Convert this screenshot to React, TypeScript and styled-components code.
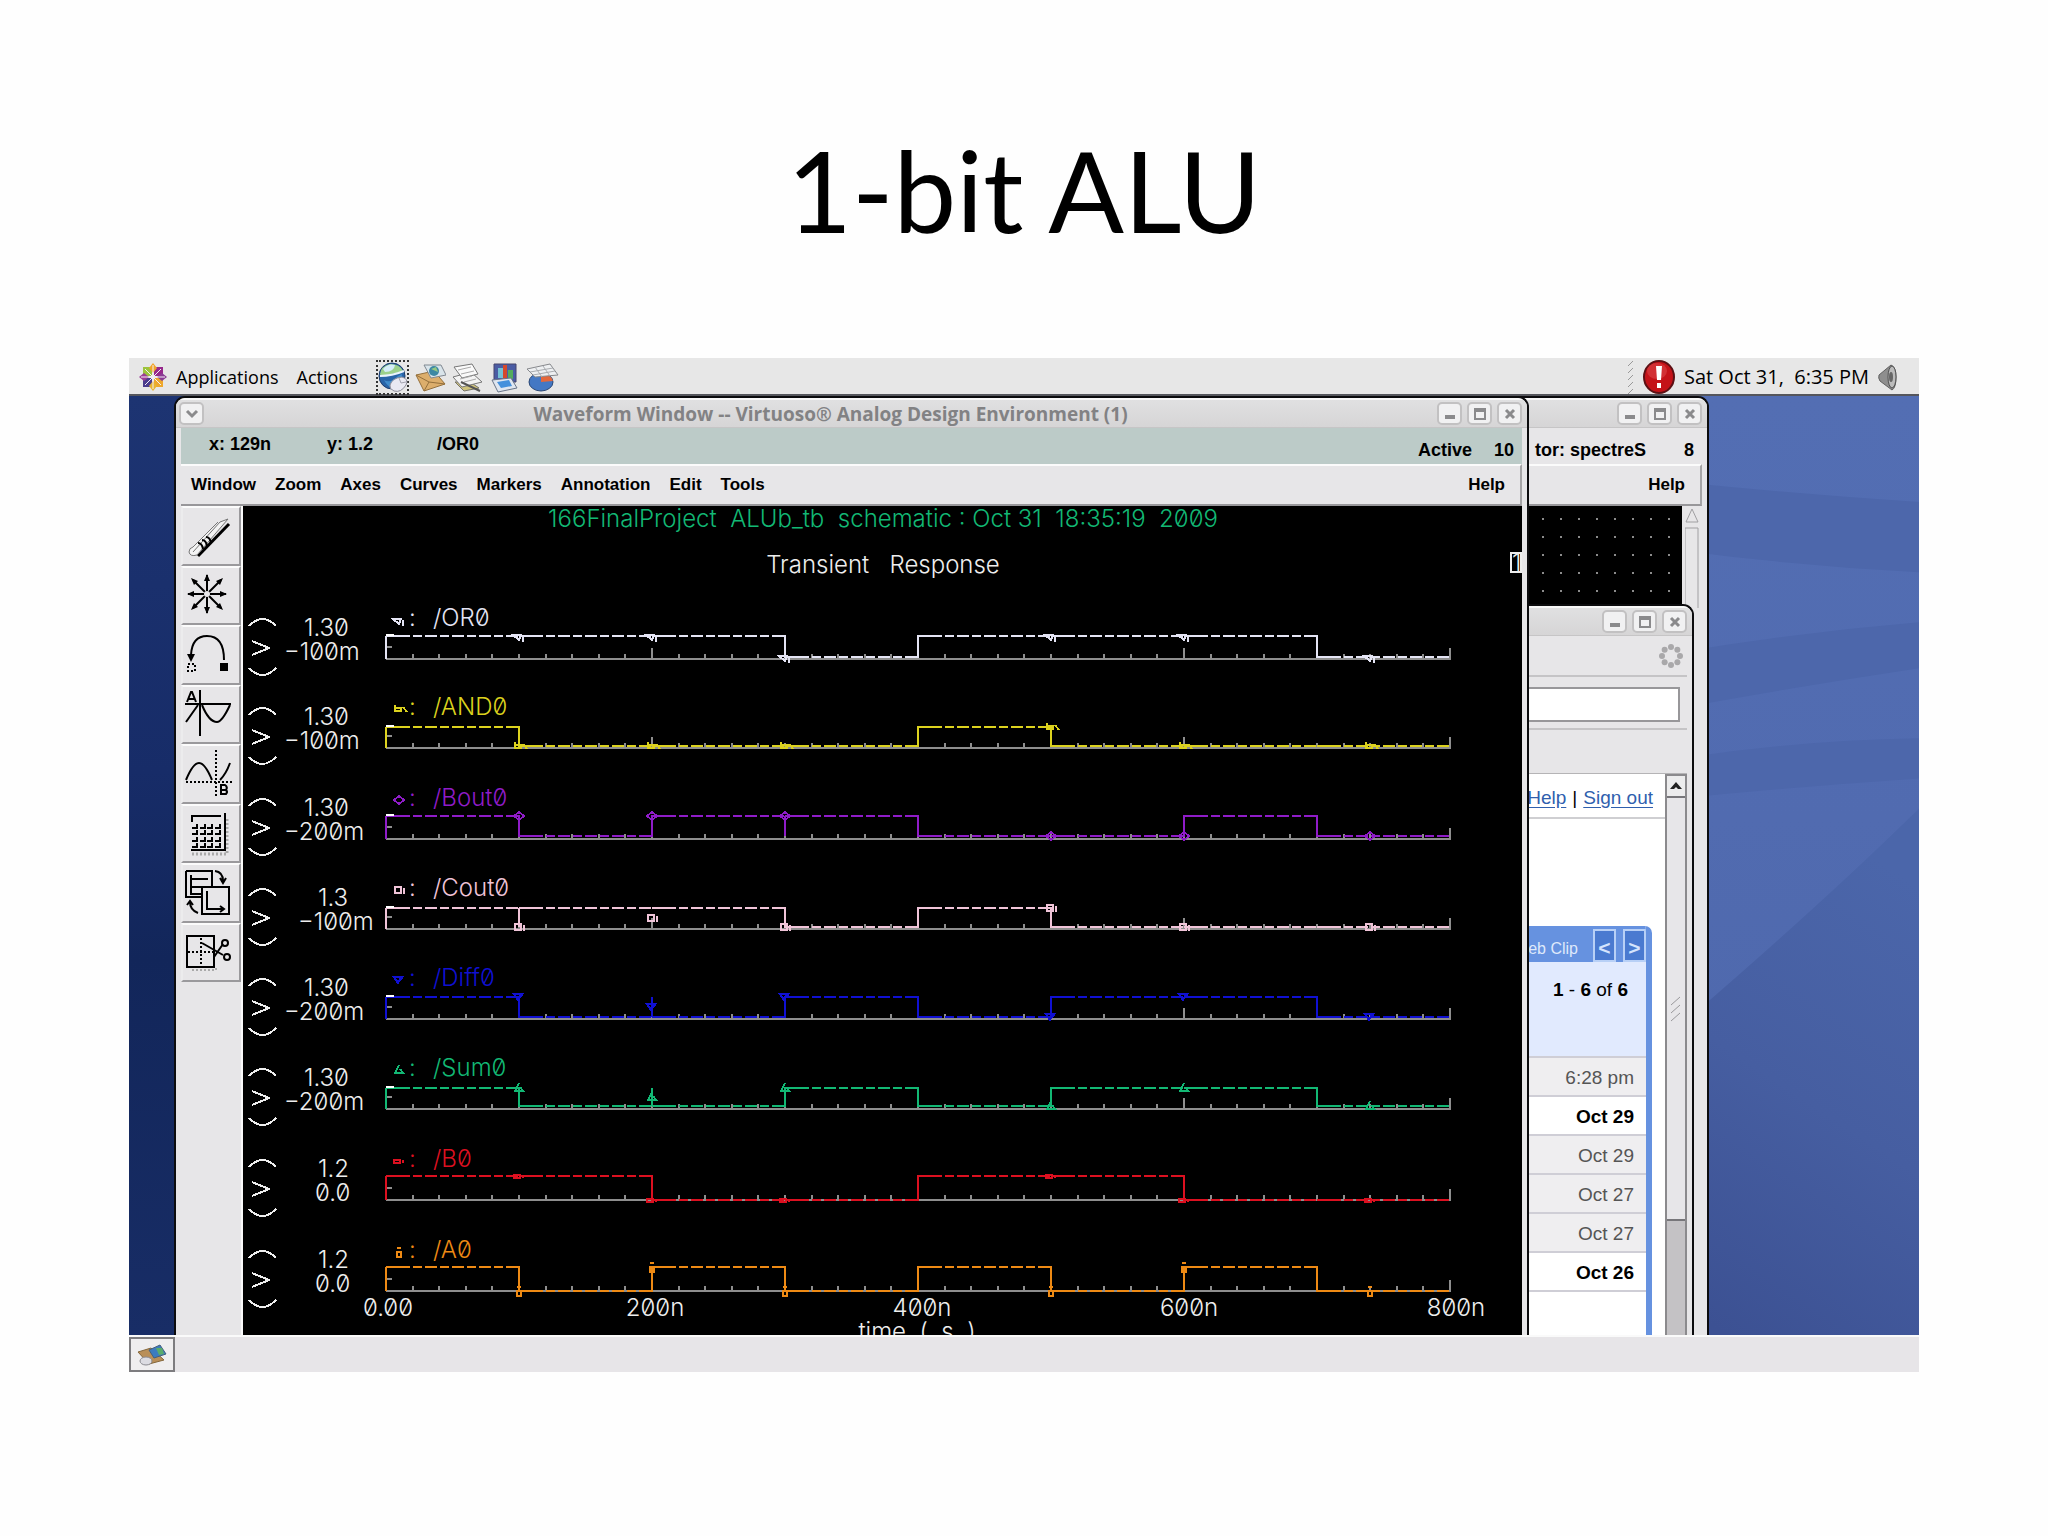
import React from 'react'
import styled, { createGlobalStyle } from 'styled-components'

const GlobalStyle = createGlobalStyle`
  * {
    box-sizing: border-box;
  }

  body {
    margin: 0;
    background-color: #fefefe;
    font-family: 'Open Sans', 'Noto Sans', sans-serif;
  }

  button {
    font: inherit;
    color: inherit;
    padding: 0;
  }

  svg {
    display: block;
    flex: none;
  }
`

const Slide = styled.main`
  min-height: 1536px;
  padding: 0 129px;
`

const SlideTitle = styled.h1`
  margin: 0;
  padding: 124px 0 102px;
  font-family: Lato, sans-serif;
  font-size: 112px;
  font-weight: 400;
  line-height: 132px;
  text-align: center;
  color: #000;
`

const Screen = styled.section`
  overflow: hidden;
`

const TopPanel = styled.header`
  display: flex;
  align-items: center;
  height: 38px;
  padding: 2px 21px 0 10px;
  border-bottom: 2px solid #55565c;
  background-color: #e7e7e7;
  font-size: 18px;
  line-height: 24px;
`

const PanelMenu = styled.button`
  display: flex;
  align-items: center;
  gap: 9px;
  margin-right: 18px;
  border: none;
  background: none;
`

const Launchers = styled.div`
  display: flex;
  align-items: center;
  gap: 4px;
`

const Launcher = styled.button<{ $focused?: boolean }>`
  display: grid;
  place-items: center;
  width: 33px;
  height: 35px;
  border: 2px dotted ${(p) => (p.$focused ? '#333' : 'transparent')};
  background: none;
`

const Tray = styled.div`
  display: flex;
  align-items: center;
  gap: 9px;
  margin-left: auto;
  white-space: pre;
`

const Clock = styled.span`
  font-size: 20px;
`

const Desktop = styled.div`
  position: relative;
  background: linear-gradient(#1d3472, #172c68 40%, #12265a 60%, #182d66);
`

const Wallpaper = styled.svg`
  position: absolute;
  top: 0;
  right: 0;
  width: 240px;
  height: 100%;
`

const WindowFrame = styled.section`
  overflow: hidden;
  padding: 0 5px;
  border: 2px solid #0c0c0e;
  border-bottom: none;
  border-radius: 11px 11px 0 0;
  background-color: #e7e6e8;
`

const MainWindow = styled(WindowFrame)`
  position: relative;
  margin: 0 390px 0 45px;
`

const BackWindow = styled(WindowFrame)<{ $top: number; $right: number }>`
  position: absolute;
  top: ${(p) => p.$top}px;
  right: ${(p) => p.$right}px;
  bottom: 0;
  width: 400px;
  display: flex;
  flex-direction: column;
`

const TitleBar = styled.div`
  display: flex;
  align-items: center;
  gap: 5px;
  height: 30px;
  flex: none;
  margin: 0 -5px;
  padding: 0 5px 0 3px;
  border-top: 2px solid #f8f8f8;
  background: linear-gradient(#e0e0e1, #d6d5d6);
  border-bottom: 1px solid #c6c5c6;
`

const TitleText = styled.h2`
  flex: 1;
  margin: 0 0 0 20px;
  font-size: 19px;
  font-weight: 700;
  line-height: 24px;
  text-align: center;
  color: #828284;
`

const WinButton = styled.button`
  display: grid;
  place-items: center;
  width: 25px;
  height: 23px;
  border: 2px solid #c2c1c2;
  border-radius: 5px;
  background-color: #f1f1f2;
`

const Spacer = styled.div`
  flex: 1;
`

const StatusBar = styled.div<{ $color: string }>`
  display: flex;
  align-items: center;
  flex: none;
  height: 36px;
  background-color: ${(p) => p.$color};
  font: 700 18px/22px 'Liberation Sans', Arial, sans-serif;
`

const Readouts = styled.div`
  display: grid;
  grid-template-columns: 118px 110px 100px;
  padding: 0 0 4px 28px;
`

const StatusRight = styled.div<{ $gap: number }>`
  display: flex;
  gap: ${(p) => p.$gap}px;
  margin-left: auto;
  padding: 8px 8px 0 0;
`

const MenuBar = styled.nav`
  display: flex;
  flex: none;
  gap: 19px;
  height: 42px;
  padding: 0 15px 0 10px;
  border-top: 2px solid #fbfbfb;
  border-right: 2px solid #a5a4a6;
  border-bottom: 2px solid #98979a;
  font: 700 17px/22px 'Liberation Sans', Arial, sans-serif;
`

const MenuItem = styled.button<{ $last?: boolean }>`
  border: none;
  background: none;
  margin-left: ${(p) => (p.$last ? 'auto' : '0')};
`

const WaveBody = styled.div`
  display: flex;
`

const ToolColumn = styled.div`
  width: 62px;
  flex: none;
  border-right: 2px solid #fafafa;
`

const Tools = styled.div`
  display: grid;
  grid-template-rows: repeat(8, 1fr);
  height: 476px;
`

const ToolButton = styled.button`
  display: grid;
  place-items: center;
  border: 2px solid;
  border-color: #fbfbfb #9a999c #9a999c #ececed;
  background-color: #e7e6e8;
`

const PlotArea = styled.div`
  flex: 1;
  min-width: 0;
  overflow: hidden;
  background-color: #000;
`

const PlotText = styled.text`
  font-family: Inter, sans-serif;
  font-size: 24px;
  font-weight: 300;
  font-feature-settings: 'zero' 1;
  white-space: pre;
`

const SchematicBody = styled.div`
  display: flex;
  flex: 1;
`

const SchematicCanvas = styled.div`
  flex: 1;
  background: radial-gradient(circle at 11px 13px, #8c8c8c 1px, transparent 1px) 0 0 / 18px 18px #000;
`

const SchematicScroll = styled.div`
  width: 20px;
  padding: 2px 3px;
`

const BrowserTools = styled.div`
  display: flex;
  align-items: center;
  justify-content: flex-end;
  flex: none;
  height: 41px;
  padding-right: 4px;
  border-bottom: 2px solid #c5c4c6;
`

const AddressRow = styled.div`
  flex: none;
  height: 53px;
  padding: 10px 7px 8px 0;
  border-bottom: 2px solid #c5c4c6;
`

const AddressInput = styled.input`
  display: block;
  width: 100%;
  height: 35px;
  border: 2px solid #98979a;
  background-color: #fff;
`

const BrowserBody = styled.div`
  display: flex;
  flex: 1;
  margin-top: 43px;
  border-top: 1px solid #b5b4b6;
`

const MailPage = styled.div`
  flex: 1;
  background-color: #fff;
  font: 400 20px/24px 'Liberation Sans', Arial, sans-serif;
`

const AccountLinks = styled.div`
  display: flex;
  justify-content: flex-end;
  gap: 6px;
  height: 45px;
  padding: 12px 12px 0 0;
  border-bottom: 2px solid #cfcfd2;
  font-size: 19px;

  a {
    color: #2f5fae;
    text-underline-offset: 3px;
  }
`

const MailBox = styled.div`
  height: 412px;
  margin: 107px 13px 0 0;
  border-right: 6px solid #6692e0;
  border-radius: 0 7px 0 0;
  overflow: hidden;
`

const ClipBar = styled.div`
  display: flex;
  justify-content: flex-end;
  gap: 7px;
  height: 36px;
  padding-top: 3px;
  background-color: #6692e0;
  color: #dfe9fb;
  font-size: 16px;
  line-height: 40px;
`

const ClipButton = styled.button`
  height: 33px;
  width: 23px;
  border: 2px solid #b8d0f6;
  background-color: #4a7ad0;
  color: #d5e4fd;
  font-size: 21px;
  font-weight: 700;
  line-height: 33px;
`

const ClipTitle = styled.span`
  margin-right: 8px;
`

const PageCount = styled.div`
  height: 94px;
  padding: 16px 18px 0 0;
  background-color: #e1eafe;
  font-size: 19px;
  text-align: right;
`

const MailTable = styled.table`
  width: 100%;
  border-collapse: collapse;
`

const MailDate = styled.td<{ $unread: boolean }>`
  height: 39px;
  padding: 2px 12px 0 0;
  border-top: 2px solid #cfced6;
  border-bottom: 2px solid #cfced6;
  background-color: ${(p) => (p.$unread ? '#fff' : '#efeef0')};
  color: ${(p) => (p.$unread ? '#000' : '#555')};
  font-size: 19px;
  font-weight: ${(p) => (p.$unread ? 700 : 400)};
  line-height: 24px;
  text-align: right;
`

const ScrollBar = styled.div`
  display: flex;
  flex-direction: column;
  width: 22px;
  border: 2px solid #8b8a8d;
  border-bottom: none;
  background-color: #c4c2c5;
`

const ScrollUp = styled.button`
  display: grid;
  place-items: center;
  height: 22px;
  border: none;
  border-bottom: 2px solid #77767a;
  background-color: #ececed;
`

const ScrollThumb = styled.div`
  display: grid;
  place-items: center;
  height: 423px;
  border-bottom: 2px solid #77767a;
  background-color: #e7e6e9;
`

const TaskBar = styled.footer`
  height: 37px;
  border-top: 2px solid #fafafa;
  background-color: #e7e5e8;
`

const TaskButton = styled.button`
  display: grid;
  place-items: center;
  width: 46px;
  height: 35px;
  border: 2px solid #7d7c7f;
  background-color: #efeeef;
`

type Trace = {
  name: string
  color: string
  top: string
  bottom: string
  labelX: [number, number]
  base: number
  high: number
  low: number
  // one entry for each 100n of the sweep
  bits: string
  spikes: number[]
  // high, low or middle for each of markerTimes
  markerLevels: string
  marker: string
}

const traces: Trace[] = [
  { name: '/OR0', color: '#e4e4f4', top: '1.30', bottom: '−100m', labelX: [61, 41], base: 153, high: 130, low: 151, bits: '11101110', spikes: [], markerLevels: 'hhlhhl', marker: 'M-6 -1H2L0 4ZM4 0V6' },
  { name: '/AND0', color: '#dcd21e', top: '1.30', bottom: '−100m', labelX: [61, 41], base: 242, high: 221, low: 240, bits: '10001000', spikes: [], markerLevels: 'lllhll', marker: 'M-4 -4V2H2V-1H-3M4 -2L8 3' },
  { name: '/Bout0', color: '#8f1cc8', top: '1.30', bottom: '−200m', labelX: [61, 41], base: 333, high: 310, low: 330, bits: '10110010', spikes: [300], markerLevels: 'hhhlll', marker: 'M-5 0L0 -4L5 0L0 4Z' },
  { name: '/Cout0', color: '#f0c4d8', top: '1.3', bottom: '−100m', labelX: [75, 55], base: 423, high: 402, low: 421, bits: '11101000', spikes: [100], markerLevels: 'lmlhll', marker: 'M-4 -3H2V3H-4ZM5 -2V4' },
  { name: '/Diff0', color: '#1010d2', top: '1.30', bottom: '−200m', labelX: [61, 41], base: 513, high: 491, low: 511, bits: '10010110', spikes: [200], markerLevels: 'hmhlhl', marker: 'M-5 -3H2L-1 3ZM4 -4L1 1' },
  { name: '/Sum0', color: '#12b874', top: '1.30', bottom: '−200m', labelX: [61, 41], base: 603, high: 582, low: 600, bits: '10010110', spikes: [200], markerLevels: 'hmhlhl', marker: 'M-5 3H3M-4 3L0 -5M1 -1L5 4' },
  { name: '/B0', color: '#dc1020', top: '1.2', bottom: '0.0', labelX: [75, 72], base: 694, high: 670, low: 694, bits: '11001100', spikes: [], markerLevels: 'hllhll', marker: 'M-5 -1H1V2H-5ZM4 -1V2' },
  { name: '/A0', color: '#ee8a14', top: '1.2', bottom: '0.0', labelX: [75, 72], base: 785, high: 761, low: 785, bits: '10101010', spikes: [], markerLevels: 'lhllhl', marker: 'M-2 -4H2M-2 0H2V5H-2Z' },
]

const X0 = 143
const xAt = (t: number) => Math.round(X0 + t * 1.33)
const DASHES = '24 3 9 3 12 3 9 3 12 3 9 3 12 3 9 3 12 3'
const markerTimes = [100, 200, 300, 500, 600, 740]
const timeLabels = ['0.00', '200n', '400n', '600n', '800n']

const TraceRow = ({ trace }: { trace: Trace }) => {
  const { base, high, low, bits, color } = trace
  const levels: Record<string, number> = { h: high, l: low, m: Math.round((high + low) / 2) }
  const levelAt = (i: number) => (bits[i] === '1' ? high : low)

  return (
    <g fill="none" strokeWidth="2">
      <path
        d={`M6 ${base - 33}Q19 ${base - 47} 33 ${base - 33}M6 ${base + 9}Q19 ${base + 23} 33 ${base + 9}M9 ${base - 18}L26 ${base - 11}L9 ${base - 4}`}
        stroke="#eee"
      />
      <PlotText x={trace.labelX[0]} y={base - 23} fill="#eee">{trace.top}</PlotText>
      <PlotText x={trace.labelX[1]} y={base + 1} fill="#eee">{trace.bottom}</PlotText>
      <path d={trace.marker} transform={`translate(156 ${base - 39})`} stroke={color} />
      <PlotText x="166" y={base - 33} fill={color}>:</PlotText>
      <PlotText x="190" y={base - 33} fill={color}>{trace.name}</PlotText>

      <path
        d={`M${X0} ${base}H${xAt(800)}V${base - 11}M${X0} ${base - 12}H149M${xAt(200)} ${base}v-11M${xAt(600)} ${base}v-11`}
        stroke="#8e8e8e"
      />
      {Array.from({ length: 39 }, (_, i) => (
        <path key={i} d={`M${xAt((i + 1) * 20)} ${base}v-5`} stroke="#8e8e8e" />
      ))}

      <path d={`M${X0} ${base}V${high}`} stroke={color} />
      {bits.split('').map((_, i) => (
        <React.Fragment key={i}>
          <path d={`M${xAt(i * 100)} ${levelAt(i)}H${xAt(i * 100 + 100)}`} stroke={color} strokeDasharray={DASHES} />
          {i > 0 && bits[i] !== bits[i - 1] && (
            <path d={`M${xAt(i * 100)} ${high - 1}V${low + 1}`} stroke={color} />
          )}
        </React.Fragment>
      ))}
      {trace.spikes.map((t) => (
        <path key={t} d={`M${xAt(t)} ${high}V${low}`} stroke={color} />
      ))}
      {markerTimes.map((t, i) => (
        <path
          key={t}
          d={trace.marker}
          transform={`translate(${xAt(t)} ${levels[trace.markerLevels[i]]})`}
          stroke={color}
        />
      ))}
      {trace.bottom !== '0.0' && <path d={`M${X0} ${high - 1}h8`} stroke="#fff" />}
    </g>
  )
}

const WavePlot = () => (
  <svg width="1279" height="829" viewBox="0 0 1279 829" shapeRendering="crispEdges">
    <PlotText x="640" y="21" fill="#12b874" textAnchor="middle">
      166FinalProject  ALUb_tb  schematic : Oct 31  18:35:19  2009
    </PlotText>
    <PlotText x="640" y="67" fill="#eee" textAnchor="middle">Transient   Response</PlotText>
    <path d="M1268 47h10v19h-10z" fill="#000" stroke="#eee" strokeWidth="2" />
    <PlotText x="1269" y="65" fill="#eee">1</PlotText>
    {traces.map((trace) => (
      <TraceRow key={trace.name} trace={trace} />
    ))}
    {timeLabels.map((label, i) => (
      <PlotText key={label} x={X0 + 2 + i * 267} y="810" fill="#eee" textAnchor="middle">{label}</PlotText>
    ))}
    <PlotText x="674" y="834" fill="#eee" textAnchor="middle">time  (  s  )</PlotText>
  </svg>
)

const WindowControls = () => (
  <>
    <WinButton aria-label="Minimize">
      <svg width="12" height="12"><path d="M1 7h10v4H1z" fill="#8a8a8c" /></svg>
    </WinButton>
    <WinButton aria-label="Maximize">
      <svg width="12" height="12"><path d="M1 1h10v10H1zM1 3h10" fill="none" stroke="#8a8a8c" strokeWidth="2" /></svg>
    </WinButton>
    <WinButton aria-label="Close">
      <svg width="12" height="12"><path d="M2 2l8 8M10 2l-8 8" fill="none" stroke="#8a8a8c" strokeWidth="3" /></svg>
    </WinButton>
  </>
)

const MenuLogo = () => (
  <svg width="28" height="28" viewBox="0 0 28 28">
    <path d="M4 4h9v9H4z" fill="#9cc43c" />
    <path d="M15 4h9v9h-9z" fill="#96288c" />
    <path d="M4 15h9v9H4z" fill="#4a3c8c" />
    <path d="M15 15h9v9h-9z" fill="#eea82c" />
    <path d="M14 0l4 5-4 5-4-5z" fill="#f0a428" />
    <path d="M28 14l-5 4-5-4 5-4z" fill="#8a3c94" />
    <path d="M14 28l4-5-4-5-4 5z" fill="#e8b430" />
    <path d="M0 14l5-4 5 4-5 4z" fill="#9c3c96" />
    <path d="M6 6l16 16M22 6L6 22M14 2v24M2 14h24" stroke="#f4eef4" strokeWidth="1" />
  </svg>
)

const GlobeIcon = () => (
  <svg width="31" height="31" viewBox="0 0 31 31">
    <circle cx="14" cy="14" r="13" fill="#2864a8" stroke="#1c3c6c" />
    <path d="M2 12Q3 4 12 2Q22 2 25 9Q16 12 3 14Z" fill="#9cd08c" />
    <path d="M5 7Q10 1 17 3Q16 10 7 10Z" fill="#d4ecf8" />
    <path d="M2 14Q14 14 26 9" fill="none" stroke="#eaf4fc" strokeWidth="2" />
    <path d="M6 18Q12 22 20 14L24 12Q24 22 14 26Q9 24 6 18Z" fill="#3f8ccc" />
    <path d="M12 23Q14 16 24 15Q31 17 28 23Q23 31 16 29Q11 27 12 23Z" fill="#e9e9f2" stroke="#8c8c98" />
    <path d="M21 16l2 5 5-1" fill="none" stroke="#a4a4b0" />
  </svg>
)

const MailIcon = () => (
  <svg width="31" height="31" viewBox="0 0 31 31">
    <path d="M1 13L19 9L30 22L9 29Z" fill="#dcae6c" stroke="#94703c" />
    <path d="M1 13L14 20L30 22M9 29L14 20" fill="none" stroke="#94703c" />
    <path d="M9 3L26 3L31 13L16 16Z" fill="#d9e4ea" stroke="#808890" />
    <circle cx="19" cy="9" r="5" fill="#3c88a4" />
    <path d="M16 7l5-2 2 5z" fill="#94c884" />
  </svg>
)

const PaperIcon = () => (
  <svg width="31" height="31" viewBox="0 0 31 31">
    <path d="M3 20L12 29L27 26L18 20Z" fill="#cfc37c" stroke="#77756a" />
    <path d="M1 15L19 10L30 20L10 25Z" fill="#f4f4f4" stroke="#777" />
    <path d="M2 5L20 2L26 12L10 16Z" fill="#fafafa" stroke="#777" />
    <path d="M6 8l13-3M9 12l13-3M8 17l12-3M12 20l12-3" stroke="#aaa" />
    <path d="M9 20L28 29" stroke="#555" strokeWidth="2" />
  </svg>
)

const SlidesIcon = () => (
  <svg width="31" height="31" viewBox="0 0 31 31">
    <path d="M5 2h22v18H5z" fill="#4a5ca4" stroke="#44446c" />
    <path d="M9 6h5v10H9z" fill="#74c0d4" />
    <path d="M14 3h4v14h-4z" fill="#d4482c" />
    <path d="M19 8h5v9h-5z" fill="#54ac5c" />
    <path d="M3 18L22 16L28 26L9 30Z" fill="#dfe6f0" stroke="#687488" />
    <path d="M8 20L20 18L23 24L12 26Z" fill="#4490dc" />
  </svg>
)

const ChartIcon = () => (
  <svg width="33" height="31" viewBox="0 0 33 31">
    <ellipse cx="15" cy="20" rx="12" ry="9" fill="#4478c4" stroke="#2c4874" />
    <path d="M15 20L15 12Q25 12 27 19Z" fill="#e4683c" />
    <path d="M1 7L24 2L32 13L9 15Z" fill="#eef0f2" stroke="#86888c" />
    <path d="M4 10l23-4M7 13l22-4M9 5l7 10M17 4l7 10" stroke="#a9acb0" />
  </svg>
)

const AlertIcon = () => (
  <svg width="32" height="34" viewBox="0 0 32 34">
    <ellipse cx="16" cy="17" rx="15" ry="16" fill="#c41218" stroke="#5c1014" strokeWidth="2" />
    <ellipse cx="14" cy="11" rx="10" ry="8" fill="#dc4448" opacity="0.6" />
    <path d="M13 6h6l-1 14h-4zM14 23h4v5h-4z" fill="#fff" />
  </svg>
)

const SpeakerIcon = () => (
  <svg width="20" height="27" viewBox="0 0 20 27">
    <path d="M1 11L13 1Q18 3 18 13Q18 24 14 26L2 17Q0 14 1 11Z" fill="#8e8e8e" stroke="#606060" />
    <ellipse cx="14" cy="13" rx="4" ry="11" fill="#bcbcbc" stroke="#505050" />
    <ellipse cx="13" cy="13" rx="2" ry="5" fill="#666" />
  </svg>
)

const ToolGlyph = ({ children }: { children: React.ReactNode }) => (
  <svg width="52" height="52" viewBox="1 0 52 52" fill="none" stroke="#000" strokeWidth="2">
    {children}
  </svg>
)

const tools: { name: string; glyph: React.ReactNode }[] = [
  {
    name: 'Erase',
    glyph: (
      <>
        <path d="M14 46L45 14" strokeWidth="3" />
        <path d="M9 42L36 12L44 9L13 45Q6 47 5 42Q5 38 9 37L34 12" fill="#f4f4f4" stroke="#777" strokeWidth="1" />
        <path d="M14 33q4 0 5 6M18 30q4 0 5 6M22 27q4 0 5 6" />
      </>
    ),
  },
  {
    name: 'Redraw',
    glyph: (
      <>
        <path d="M23 6V44M4 25H42M9 11L37 39M37 11L9 39" />
        <path d="M23 5l3 7h-6zM23 45l3-7h-6zM3 25l7-3v6zM43 25l-7-3v6zM7 9l7 3-4 4zM39 9l-7 3 4 4zM7 41l7-3-4-4zM39 41l-7-3 4-4z" fill="#000" stroke="none" />
        <circle cx="23" cy="25" r="3" fill="#e7e6e8" stroke="none" />
      </>
    ),
  },
  {
    name: 'Move',
    glyph: (
      <>
        <path d="M7 26Q8 7 23 7Q40 7 40 31" />
        <path d="M3 25h8l-4 8z" fill="#000" stroke="none" />
        <path d="M36 34h8v8h-8z" fill="#000" stroke="none" />
        <path d="M4 35h7v7h-7z" strokeDasharray="2 2" />
      </>
    ),
  },
  {
    name: 'Crosshair A',
    glyph: (
      <>
        <path d="M0 16H47M16 2V48M2 34L14 17M18 17Q25 34 33 34Q38 34 46 17" />
        <path d="M3 14L7 4H8L12 14M4 11H11" />
      </>
    ),
  },
  {
    name: 'Crosshair B',
    glyph: (
      <>
        <path d="M32 2V48M2 34H48" strokeDasharray="2 2" />
        <path d="M2 32Q9 15 15 15Q21 15 28 32M36 32Q42 26 46 15" />
        <path d="M37 37V46H42Q44 44 42 42H37M42 42Q44 39 41 37H36" />
      </>
    ),
  },
  {
    name: 'Calculator',
    glyph: (
      <>
        <path d="M8 47H43V12" stroke="#aaa" strokeDasharray="2 2" strokeWidth="3" />
        <path d="M8 15V9H37M7 43H41V6" />
        {[18, 24, 31, 37].map((y) =>
          [8, 16, 23, 31].map((x) => <path key={`${x}-${y}`} d={`M${x} ${y + 3}h5v-4`} />)
        )}
      </>
    ),
  },
  {
    name: 'Switch Axis Mode',
    glyph: (
      <>
        <path d="M2 4H28V20M2 4V30H18" />
        <path d="M7 8V28M7 12H24M7 20H17M7 27H17M31 4q8 1 8 10M36 11l3 5 3-5M14 46q-8-3-8-11M3 38l3-4 3 4" />
        <path d="M18 20H45V47H18zM23 24V42H39M36 39l4 3-4 3" />
      </>
    ),
  },
  {
    name: 'Subwindows',
    glyph: (
      <>
        <path d="M32 42V44H7" stroke="#aaa" strokeDasharray="2 2" />
        <path d="M3 10H30V41H3z" />
        <path d="M4 26H30M17 12V40" strokeDasharray="2 2" />
        <path d="M18 17L39 29M30 31L39 18" />
        <circle cx="41" cy="17" r="3" />
        <circle cx="43" cy="31" r="3" />
      </>
    ),
  },
]

const menus = ['Window', 'Zoom', 'Axes', 'Curves', 'Markers', 'Annotation', 'Edit', 'Tools']

const mails = [
  { date: '6:28 pm', unread: false },
  { date: 'Oct 29', unread: true },
  { date: 'Oct 29', unread: false },
  { date: 'Oct 27', unread: false },
  { date: 'Oct 27', unread: false },
  { date: 'Oct 26', unread: true },
]

const spinnerDots = Array.from({ length: 8 }, (_, i) => (i * Math.PI) / 4)

const App = () => {
  return (
    <Slide>
      <GlobalStyle />
      <SlideTitle>1-bit ALU</SlideTitle>
      <Screen>
        <TopPanel>
          <PanelMenu><MenuLogo />Applications</PanelMenu>
          <PanelMenu>Actions</PanelMenu>
          <Launchers>
            <Launcher $focused aria-label="Web Browser"><GlobeIcon /></Launcher>
            <Launcher aria-label="Email"><MailIcon /></Launcher>
            <Launcher aria-label="Word Processor"><PaperIcon /></Launcher>
            <Launcher aria-label="Presentation"><SlidesIcon /></Launcher>
            <Launcher aria-label="Spreadsheet"><ChartIcon /></Launcher>
          </Launchers>
          <Tray>
            <svg width="6" height="34" stroke="#999" strokeWidth="1">
              <path d="M0 6l5-5M0 13l5-5M0 20l5-5M0 27l5-5M0 34l5-5" />
            </svg>
            <AlertIcon />
            <Clock>Sat Oct 31,  6:35 PM</Clock>
            <SpeakerIcon />
          </Tray>
        </TopPanel>

        <Desktop>
          <Wallpaper viewBox="0 0 240 938" preserveAspectRatio="none">
            <defs>
              <linearGradient id="sky" x1="0" y1="0" x2="0" y2="1">
                <stop offset="0" stopColor="#536eb3" />
                <stop offset="0.45" stopColor="#516bb0" />
                <stop offset="1" stopColor="#4c66aa" />
              </linearGradient>
              <linearGradient id="deep" x1="0.5" y1="0" x2="0.2" y2="1">
                <stop offset="0" stopColor="#4b66aa" />
                <stop offset="0.5" stopColor="#465ea1" />
                <stop offset="1" stopColor="#3c5193" />
              </linearGradient>
            </defs>
            <path d="M0 0H240V938H0z" fill="url(#sky)" />
            <path d="M0 86Q120 98 240 106V176Q120 170 0 154zM0 256Q120 236 240 226V272Q120 290 0 312zM0 362Q120 344 240 342V382Q120 390 0 402z" fill="#4d67ab" />
            <path d="M240 412Q140 510 0 630V938H240z" fill="url(#deep)" />
          </Wallpaper>

          <BackWindow $top={0} $right={210}>
            <TitleBar><Spacer /><WindowControls /></TitleBar>
            <StatusBar $color="#e7e6e8">
              <StatusRight $gap={38}><span>tor: spectreS</span><span>8</span></StatusRight>
            </StatusBar>
            <MenuBar><MenuItem $last>Help</MenuItem></MenuBar>
            <SchematicBody>
              <SchematicCanvas />
              <SchematicScroll>
                <svg width="14" height="100" fill="none" stroke="#a09fa2">
                  <path d="M7 1L1 14H13z" />
                  <path d="M0 100V20H13V100" />
                </svg>
              </SchematicScroll>
            </SchematicBody>
          </BackWindow>

          <BackWindow $top={208} $right={225}>
            <TitleBar><Spacer /><WindowControls /></TitleBar>
            <BrowserTools>
              <svg width="24" height="24" fill="#a9a8aa">
                {spinnerDots.map((a) => (
                  <circle key={a} cx={12 + 9 * Math.cos(a)} cy={12 + 9 * Math.sin(a)} r="3" />
                ))}
              </svg>
            </BrowserTools>
            <AddressRow><AddressInput type="text" aria-label="Address" /></AddressRow>
            <BrowserBody>
              <MailPage>
                <AccountLinks>
                  <a href="#help">Help</a>|<a href="#signout">Sign out</a>
                </AccountLinks>
                <MailBox>
                  <ClipBar>
                    <ClipTitle>eb Clip</ClipTitle>
                    <ClipButton>&lt;</ClipButton>
                    <ClipButton>&gt;</ClipButton>
                  </ClipBar>
                  <PageCount><b>1</b> - <b>6</b> of <b>6</b></PageCount>
                  <MailTable>
                    <tbody>
                      {mails.map((mail, i) => (
                        <tr key={i}>
                          <MailDate $unread={mail.unread}>{mail.date}</MailDate>
                        </tr>
                      ))}
                    </tbody>
                  </MailTable>
                </MailBox>
              </MailPage>
              <ScrollBar>
                <ScrollUp aria-label="Scroll up">
                  <svg width="12" height="8"><path d="M6 0L12 7H8L6 5L4 7H0z" fill="#222" /></svg>
                </ScrollUp>
                <ScrollThumb>
                  <svg width="12" height="26" stroke="#99989b"><path d="M1 9l9-8M1 17l9-8M1 25l9-8" /></svg>
                </ScrollThumb>
              </ScrollBar>
            </BrowserBody>
          </BackWindow>

          <MainWindow>
            <TitleBar>
              <WinButton aria-label="Window menu">
                <svg width="14" height="10"><path d="M2 2l5 5 5-5" fill="none" stroke="#8a8a8c" strokeWidth="3" /></svg>
              </WinButton>
              <TitleText>Waveform Window -- Virtuoso® Analog Design Environment (1)</TitleText>
              <WindowControls />
            </TitleBar>
            <StatusBar $color="#bccbc8">
              <Readouts><span>x: 129n</span><span>y: 1.2</span><span>/OR0</span></Readouts>
              <StatusRight $gap={22}><span>Active</span><span>10</span></StatusRight>
            </StatusBar>
            <MenuBar>
              {menus.map((menu) => (
                <MenuItem key={menu}>{menu}</MenuItem>
              ))}
              <MenuItem $last>Help</MenuItem>
            </MenuBar>
            <WaveBody>
              <ToolColumn>
                <Tools>
                  {tools.map((tool) => (
                    <ToolButton key={tool.name} aria-label={tool.name}>
                      <ToolGlyph>{tool.glyph}</ToolGlyph>
                    </ToolButton>
                  ))}
                </Tools>
              </ToolColumn>
              <PlotArea><WavePlot /></PlotArea>
            </WaveBody>
          </MainWindow>
        </Desktop>

        <TaskBar>
          <TaskButton aria-label="Show desktop">
            <svg width="30" height="22" viewBox="0 0 30 22">
              <path d="M1 8L14 4L27 16L12 20Z" fill="#b98f58" stroke="#85683c" />
              <path d="M12 6L23 1L29 10L17 14Z" fill="#3c7cc0" stroke="#44607c" />
              <path d="M19 4l6 0 2 6-5 1z" fill="#5aac6c" />
              <ellipse cx="9" cy="17" rx="6" ry="4" fill="#dcdce2" stroke="#8a8a90" />
            </svg>
          </TaskButton>
        </TaskBar>
      </Screen>
    </Slide>
  )
}

export default App
